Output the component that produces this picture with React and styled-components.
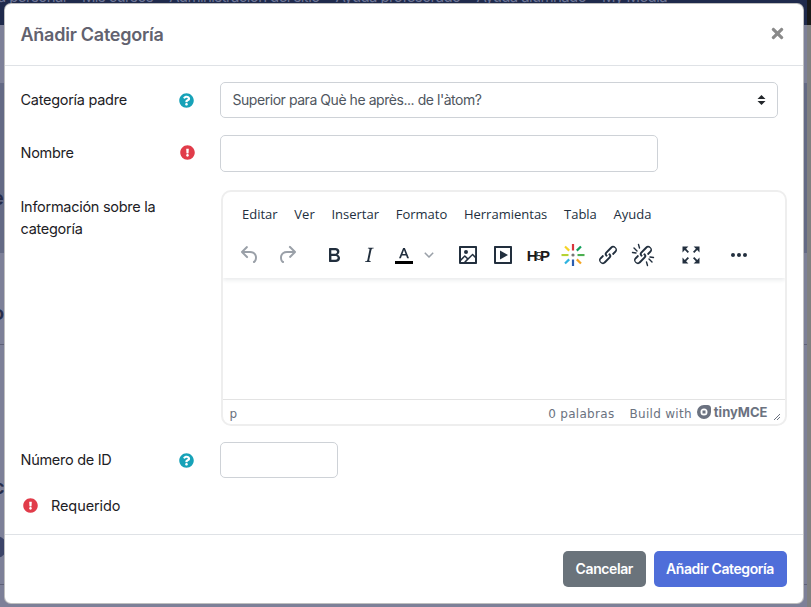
import React from "react";
import styled, { createGlobalStyle } from "styled-components";
import { FaQuestionCircle, FaExclamationCircle, FaTimes } from "react-icons/fa";

const Global = createGlobalStyle`
  html, body { margin: 0; padding: 0; height: 607px; overflow: hidden; }
  body { font-family: Inter, "Liberation Sans", sans-serif; font-size: 14px; color: #1d2125; background: #7d8098; }
  * { box-sizing: border-box; }
`;

const Page = styled.div`
  position: relative; width: 811px; height: 607px; display: flex; overflow: hidden;
`;
const Backdrop = styled.div`
  flex: 1; display: flex; flex-direction: column; min-width: 0;
`;
const Scrollbar = styled.div`
  width: 4px; background: linear-gradient(#191919 0 25px, #808080 25px);
`;
const Nav = styled.div`
  height: 25px; background: #1f2a4c; display: flex; gap: 16px; color: #6d7597;
  font-size: 15px; line-height: 15px; letter-spacing: -0.6px; overflow: hidden; flex: none;
`;
const NavItem = styled.span`
  white-space: nowrap; margin-top: -11px; height: 20px;
  &:first-child { margin-left: -25px; }
`;
const Band = styled.div`
  height: ${p => p.$h}px; flex: none; background: ${p => p.$dark ? "#646a85" : "#7d8098"};
  border-bottom: ${p => p.$line ? "1px solid #5f6178" : "none"};
  padding-top: ${p => p.$pt || 0}px; color: #262c4a; overflow: hidden;
`;
const Peek = styled.div`
  font-size: 20px; font-weight: 600; line-height: 20px; margin-left: ${p => p.$ml}px; white-space: nowrap;
`;
const Dot = styled.div`
  width: 22px; height: 22px; border-radius: 50%; background: #3c4468; margin-left: -15px;
`;

const Overlay = styled.div`
  position: absolute; left: 3.5px; top: 3px; width: 800px; height: 601px;
`;
const Modal = styled.div`
  width: 100%; height: 100%; background: #fff; border: 1px solid rgba(0,0,0,.25); border-radius: 7px;
  display: flex; flex-direction: column; overflow: hidden;
`;
const Header = styled.header`
  height: 62px; flex: none; padding: 0 17px 0 16px; display: flex; align-items: center; justify-content: space-between;
  border-bottom: 1px solid #dfe2e6;
`;
const Title = styled.h5`
  margin: 0; font-size: 18px; font-weight: 600; color: #62626f; letter-spacing: -0.25px;
`;
const Close = styled.button`
  border: 0; background: none; padding: 0; width: 17px; height: 17px; margin-bottom: 3px; display: flex; color: #8a8a8a;
  svg { width: 17px; height: 17px; }
`;
const Body = styled.div`
  flex: 1; padding: 16px 16px 0;
`;
const Row = styled.div`
  display: flex; align-items: ${p => p.$top ? "flex-start" : "center"}; margin-bottom: ${p => p.$mb}px;
`;
const Label = styled.label`
  width: 149px; flex: none; line-height: 22px; letter-spacing: -0.28px; font-size: 14.5px; color: #1d2125;
  padding-top: ${p => p.$top ? 6 : 0}px; margin-bottom: ${p => p.$up ? 2 : 0}px;
`;
const IconCell = styled.span`
  width: 50px; flex: none; display: flex; padding-left: ${p => p.$pl || 9}px; color: ${p => p.$c};
  margin-bottom: ${p => p.$up ? 2 : 0}px;
  svg { width: 15px; height: 15px; }
`;
const Select = styled.div`
  width: 558px; height: 36px; border: 1px solid #ced2d7; border-radius: 5px; padding: 0 12px 2px; display: flex;
  align-items: center; justify-content: space-between; color: #4f5660; font-size: 14px; letter-spacing: -0.45px;
  svg { margin: 2px -1px 0 0; }
`;
const Input = styled.input`
  display: block; width: ${p => p.$w}px; height: ${p => p.$h}px; border: 1px solid #ced2d7; border-radius: 5px; background: #fff; outline: 0;
`;
const Editor = styled.div`
  width: 566px; height: 236px; margin-left: 1px; border: 2px solid #eeeeee; border-radius: 10px; display: flex; flex-direction: column; overflow: hidden;
`;
const EditorHead = styled.div`
  height: 86px; flex: none; box-shadow: 0 2px 4px rgba(34,47,62,.1); padding: 8px 0 0 10px; position: relative;
`;
const Menu = styled.div`
  display: flex; height: 28px; align-items: center; gap: 16.7px; padding-left: 9.5px; font-family: "Open Sans", sans-serif; font-size: 13px; color: #222f3e;
`;
const Toolbar = styled.div`
  display: flex; gap: 13px; margin-top: 7px; margin-left: 0; height: 40px; align-items: center;
`;
const Group = styled.div`
  display: flex; gap: ${p => p.$gap || 0}px; align-items: center; margin-left: ${p => p.$ml || 0}px;
`;
const Tool = styled.span`
  width: ${p => p.$w || 35}px; height: 34px; display: flex; align-items: center; justify-content: center;
  color: ${p => p.$off ? "#9aa0a8" : "#222f3e"};
  svg { display: block; fill: currentColor; }
`;
const H5p = styled.span`
  font-family: "Liberation Sans", sans-serif; font-weight: 700; font-size: 15px; letter-spacing: -0.8px; color: #1a1a1a;
`;
const Five = styled.span`
  font-size: 11px; font-weight: 400; margin: 0 -1px; position: relative; top: -1px;
`;
const EditArea = styled.div` flex: 1; `;
const Status = styled.div`
  height: 25px; flex: none; border-top: 1px solid #e3e3e3; display: flex; align-items: center; padding: 3px 4px 0 7px;
  font-family: "DejaVu Sans", sans-serif; font-size: 12px; color: #6b7280; letter-spacing: 0.3px;
`;
const Path = styled.span` flex: 1; `;
const Words = styled.span` margin-right: 15px; `;
const Brand = styled.span`
  display: inline-flex; align-items: center;
`;
const BrandLogo = styled.span`
  display: flex; margin: -3px 3px 0 5px;
`;
const BrandName = styled.b`
  font-family: Inter, sans-serif; font-weight: 700; font-size: 13px; color: #6b7280; letter-spacing: 0; margin-top: -3px;
`;
const Resize = styled.svg`
  margin-left: 3px; margin-top: 5px;
`;
const Required = styled.div`
  display: flex; align-items: center; gap: 13.5px; padding-left: 2px; margin-top: 19px; font-size: 14.5px; letter-spacing: -0.1px; color: #1d2125;
  svg { width: 15px; height: 15px; color: #e13c4a; }
`;
const Footer = styled.footer`
  height: 69px; flex: none; border-top: 1px solid #dfe2e6; display: flex; justify-content: flex-end; align-items: flex-start; gap: 8px; padding: 16px 16px 0 0;
`;
const Button = styled.button`
  height: 36px; border: 0; border-radius: 5px; padding: 0 12.5px 1px; background: ${p => p.$bg}; color: #fff;
  font-family: Inter, sans-serif; font-size: 14px; font-weight: 600; letter-spacing: -0.4px;
`;

const Ic = ({ d, s = 24, rule }) => (
  <svg width={s} height={s} viewBox="0 0 24 24"><path d={d} fillRule={rule} /></svg>
);

const undo = "M6.4 8H12c3.7 0 6.2 2 6.8 5.1.6 2.7-.4 5.6-2.3 6.8a1 1 0 0 1-1-1.8c1.1-.6 1.8-2.7 1.4-4.6-.5-2.1-2.1-3.5-4.9-3.5H6.4l3.3 3.3a1 1 0 1 1-1.4 1.4l-5-5a1 1 0 0 1 0-1.4l5-5a1 1 0 0 1 1.4 1.4L6.4 8Z";
const redo = "M17.6 10H12c-2.8 0-4.4 1.4-4.9 3.5-.4 2 .3 4 1.4 4.6a1 1 0 1 1-1 1.8c-2-1.2-2.9-4.1-2.3-6.8.6-3 3-5.1 6.8-5.1h5.6l-3.3-3.3a1 1 0 1 1 1.4-1.4l5 5a1 1 0 0 1 0 1.4l-5 5a1 1 0 0 1-1.4-1.4l3.3-3.3Z";
const bold = "M7.8 19c-.3 0-.5 0-.6-.2l-.2-.5V5.7c0-.2 0-.4.2-.5l.6-.2h5c1.5 0 2.7.3 3.5 1 .7.6 1.1 1.4 1.1 2.5a3 3 0 0 1-.6 1.9c-.4.6-1 1-1.6 1.2.4.1.9.3 1.3.6s.8.7 1 1.2c.4.4.5 1 .5 1.6 0 1.3-.4 2.3-1.3 3-.8.7-2.1 1-3.8 1H7.8Zm5-8.3c.6 0 1.2-.1 1.6-.5.4-.3.6-.7.6-1.3 0-1.1-.8-1.7-2.3-1.7H9.3v3.5h3.4Zm.5 6c.7 0 1.3-.1 1.7-.4.4-.4.6-.9.6-1.5s-.2-1-.7-1.4c-.4-.3-1-.4-2-.4H9.4v3.8h4Z";
const italic = "M16.7 4.7l-.1.9h-.3c-.6 0-1 0-1.4.3-.3.3-.4.6-.5 1.1l-2.1 9.8v.6c0 .5.4.8 1.4.8h.2l-.2.8H8l.2-.8h.2c1.1 0 1.8-.5 2-1.5l2-9.8.1-.5c0-.6-.4-.8-1.4-.8h-.3l.2-.9h5.8Z";
const image = "M5 15.7l3.3-3.2c.3-.3.7-.3 1 0L12 15l4.1-4c.3-.4.8-.4 1 0l2 1.9V5H5v10.7ZM5 18v1h3l2.8-2.9-2-2L5 17.9Zm14-3l-2.5-2.4-6.4 6.5H19v-4ZM4 3h16c.6 0 1 .4 1 1v16c0 .6-.4 1-1 1H4a1 1 0 0 1-1-1V4c0-.6.4-1 1-1Zm6 8a2 2 0 1 0 0-4 2 2 0 0 0 0 4Z";
const media = "M4 3h16c.6 0 1 .4 1 1v16c0 .6-.4 1-1 1H4a1 1 0 0 1-1-1V4c0-.6.4-1 1-1Zm1 2v14h14V5H5Zm4 2.5 8 4.5-8 4.5v-9Z";
const link = "M6.2 12.3a1 1 0 0 1 1.4 1.4l-2 2a2 2 0 1 0 2.6 2.8l4.8-4.8a1 1 0 0 0 0-1.4 1 1 0 1 1 1.4-1.3 2.9 2.9 0 0 1 0 4L9.6 20a3.9 3.9 0 0 1-5.5-5.5l2-2Zm11.6-.6a1 1 0 0 1-1.4-1.4l2-2a2 2 0 1 0-2.6-2.8L11 10.3a1 1 0 0 0 0 1.4A1 1 0 1 1 9.6 13a2.9 2.9 0 0 1 0-4L14.4 4a3.9 3.9 0 0 1 5.5 5.5l-2 2Z";
const full = "M15.3 10 14 8.7 16.9 5.8 14.6 3.5H20.5V9.4L18.2 7.1ZM8.7 10 5.8 7.1 3.5 9.4V3.5H9.4L7.1 5.8 10 8.7ZM15.3 14 18.2 16.9 20.5 14.6V20.5H14.6L16.9 18.2 14 15.3ZM8.7 14 10 15.3 7.1 18.2 9.4 20.5H3.5V14.6L5.8 16.9Z";
const more = "M6 10a2 2 0 0 0-2 2c0 1.1.9 2 2 2a2 2 0 0 0 2-2 2 2 0 0 0-2-2Zm12 0a2 2 0 0 0-2 2c0 1.1.9 2 2 2a2 2 0 0 0 2-2 2 2 0 0 0-2-2Zm-6 0a2 2 0 0 0-2 2c0 1.1.9 2 2 2a2 2 0 0 0 2-2 2 2 0 0 0-2-2Z";

const rays = [
  [12, 1, 12, 7.5, "#d9363e"], [20, 3.5, 15.8, 7.6, "#12a05c"], [23.5, 12, 16.5, 12, "#4caf50"],
  [20, 20.5, 15.8, 16.4, "#f5a623"], [12, 23, 12, 16.5, "#2a5db0"], [4, 20.5, 8.2, 16.4, "#2eb3e0"],
  [0.5, 12, 7.5, 12, "#b5d334"], [4, 3.5, 8.2, 7.6, "#f5d328"],
];

const Spark = () => (
  <svg width="24" height="24" viewBox="0 0 24 24">
    {rays.map(([a, b, c, d, col]) => (
      <line key={col} x1={a} y1={b} x2={c} y2={d} stroke={col} strokeWidth="2.2" />
    ))}
    <circle cx="12" cy="12" r="1.6" fill="#777" />
  </svg>
);

const Unlink = () => (
  <svg width="24" height="24" viewBox="0 0 24 24">
    <path d={link} />
    <path d="M3 5 6 8M7.5 1.5 8.5 5M1.5 9.5 5 10M21 19 18 16M16.5 22.5 15.5 19M22.5 14.5 19 14" stroke="currentColor" strokeWidth="1.4" strokeLinecap="round" fill="none" />
  </svg>
);

const TextColor = () => (
  <svg width="24" height="24" viewBox="0 0 24 24">
    <path d="M12.9 5h-1.8L7 15.2h1.9l1-2.7h4.2l1 2.7H17L12.9 5Zm-2.4 6 1.5-4 1.5 4h-3Z" />
    <rect x="3" y="18" width="18" height="3" fill="#000" />
  </svg>
);

const Chevron = () => (
  <svg width="10" height="6" viewBox="0 0 10 6" style={{ fill: "none" }}>
    <path d="M.8.8 5 5 9.2.8" stroke="#9aa0a8" strokeWidth="1.5" />
  </svg>
);

const Carets = () => (
  <svg width="9" height="12" viewBox="0 0 9 12"><path d="M4.5 1 8.5 5H.5ZM4.5 11 .5 7h8Z" fill="#23272b" /></svg>
);

const TinyLogo = () => (
  <svg width="14" height="14" viewBox="0 0 14 14">
    <path fill="#6b7280" fillRule="evenodd" d="M7 0h3.5A3.5 3.5 0 0 1 14 3.5V7a7 7 0 1 1-7-7Zm0 3.5a3.5 3.5 0 1 0 0 7 3.5 3.5 0 0 0 0-7Z" />
    <rect x="5.5" y="5.5" width="3" height="3" fill="#6b7280" />
  </svg>
);

export default function App() {
  return (
    <>
      <Global />
      <Page>
        <Backdrop aria-hidden="true">
          <Nav>
            {["Área personal", "Mis cursos", "Administración del sitio", "Ayuda profesorado", "Ayuda alumnado", "My Media"].map(t => <NavItem key={t}>{t}</NavItem>)}
          </Nav>
          <Band $h={58} />
          <Band $h={170} $dark $pt={105}><Peek $ml={-8}>e</Peek></Band>
          <Band $h={92} $line $pt={50}><Peek $ml={-8}>o</Peek></Band>
          <Band $h={150} $pt={132}><Peek $ml={-7}>c</Peek></Band>
          <Band $h={90} $line $pt={41}><Dot /></Band>
        </Backdrop>
        <Scrollbar />
        <Overlay>
          <Modal>
            <Header>
              <Title>Añadir Categoría</Title>
              <Close aria-label="Cerrar"><FaTimes /></Close>
            </Header>
            <Body>
              <Row $mb={17}>
                <Label>Categoría padre</Label>
                <IconCell $c="#17a2b8"><FaQuestionCircle /></IconCell>
                <Select>Superior para Què he après... de l'àtom?<Carets /></Select>
              </Row>
              <Row $mb={18}>
                <Label $up>Nombre</Label>
                <IconCell $c="#e13c4a" $pl={10} $up><FaExclamationCircle /></IconCell>
                <Input $w={438} $h={37} />
              </Row>
              <Row $top $mb={16}>
                <Label $top>Información sobre la categoría</Label>
                <IconCell />
                <Editor>
                  <EditorHead>
                    <Menu>
                      {["Editar", "Ver", "Insertar", "Formato", "Herramientas", "Tabla", "Ayuda"].map(m => <span key={m}>{m}</span>)}
                    </Menu>
                    <Toolbar>
                      <Group $gap={2}>
                        <Tool $off><Ic d={undo} /></Tool>
                        <Tool $off><Ic d={redo} /></Tool>
                      </Group>
                      <Group $ml={-1}>
                        <Tool><Ic d={bold} /></Tool>
                        <Tool><Ic d={italic} /></Tool>
                        <Tool><TextColor /></Tool>
                        <Tool $w={15}><Chevron /></Tool>
                      </Group>
                      <Group $ml={1}>
                        <Tool><Ic d={image} rule="evenodd" /></Tool>
                        <Tool><Ic d={media} rule="evenodd" /></Tool>
                        <Tool><H5p>H<Five>5</Five>P</H5p></Tool>
                        <Tool><Spark /></Tool>
                        <Tool><Ic d={link} /></Tool>
                        <Tool><Unlink /></Tool>
                      </Group>
                      <Group><Tool><Ic d={full} /></Tool></Group>
                      <Group><Tool><Ic d={more} /></Tool></Group>
                    </Toolbar>
                  </EditorHead>
                  <EditArea />
                  <Status>
                    <Path>p</Path>
                    <Words>0 palabras</Words>
                    <Brand>Build with<BrandLogo><TinyLogo /></BrandLogo><BrandName>tinyMCE</BrandName></Brand>
                    <Resize width="10" height="10" viewBox="0 0 10 10"><path d="M9 3 3 9M9 6 6 9" stroke="#6b7280" strokeWidth="1" fill="none" /></Resize>
                  </Status>
                </Editor>
              </Row>
              <Row $mb={0}>
                <Label>Número de ID</Label>
                <IconCell $c="#17a2b8"><FaQuestionCircle /></IconCell>
                <Input $w={118} $h={36} />
              </Row>
              <Required><FaExclamationCircle />Requerido</Required>
            </Body>
            <Footer>
              <Button $bg="#6a737b">Cancelar</Button>
              <Button $bg="#4f6ed9">Añadir Categoría</Button>
            </Footer>
          </Modal>
        </Overlay>
      </Page>
    </>
  );
}
